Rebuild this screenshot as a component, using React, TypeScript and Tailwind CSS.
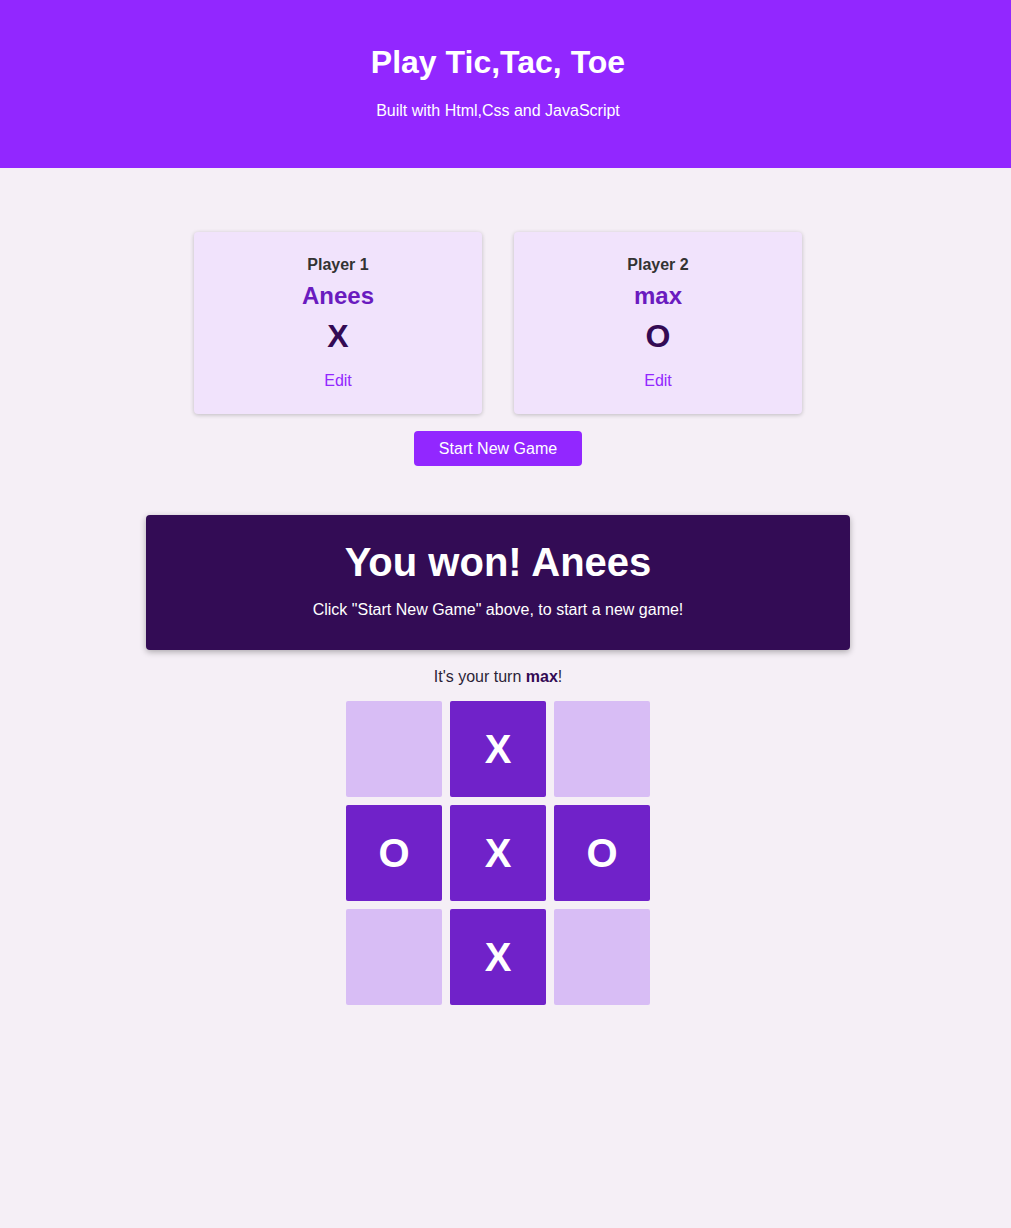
import React from "react";

const font = { fontFamily: '"Liberation Sans", Arial, Helvetica, sans-serif' };

function PlayerCard({ label, name, symbol }: { label: string; name: string; symbol: string }) {
  return (
    <div className="w-[288px] h-[182px] bg-[#f1e3fc] rounded-[4px] shadow-[0_1px_4px_rgba(0,0,0,0.22)] flex flex-col items-center pt-[24px]">
      <div className="text-[16px] leading-[18px] font-bold text-[#333]">{label}</div>
      <div className="mt-[8px] text-[24px] leading-[28px] font-bold text-[#6a1bbf]">{name}</div>
      <div className="mt-[8px] text-[32px] leading-[37px] font-bold text-[#330a54]">{symbol}</div>
      <div className="mt-[17px] text-[16px] leading-[18px] text-[#9227ff]">Edit</div>
    </div>
  );
}

const board: string[] = ["", "X", "", "O", "X", "O", "", "X", ""];

export default function App() {
  return (
    <div style={font} className="min-h-[1228px] bg-[#f5eff6]">
      <header className="h-[168px] bg-[#9227ff] pr-[15px] flex flex-col items-center pt-[44px]">
        <h1 className="text-[32px] leading-[37px] font-bold text-white">Play Tic,Tac, Toe</h1>
        <p className="mt-[21px] text-[16px] leading-[18px] text-white">Built with Html,Css and JavaScript</p>
      </header>
      <main className="pr-[15px] flex flex-col items-center">
        <div className="mt-[64px] flex gap-[32px]">
          <PlayerCard label="Player 1" name="Anees" symbol="X" />
          <PlayerCard label="Player 2" name="max" symbol="O" />
        </div>
        <button className="mt-[17px] w-[168px] h-[35px] bg-[#9227ff] rounded-[4px] text-white text-[16px]">
          Start New Game
        </button>
        <div className="mt-[49px] w-[704px] h-[135px] bg-[#330c55] rounded-[4px] shadow-[0_2px_6px_rgba(0,0,0,0.3)] flex flex-col items-center pt-[24px]">
          <h2 className="text-[40px] leading-[46px] font-bold text-white">You won! Anees</h2>
          <p className="mt-[16px] text-[16px] leading-[18px] text-white">
            Click "Start New Game" above, to start a new game!
          </p>
        </div>
        <p className="mt-[18px] text-[16px] leading-[18px] text-[#2c1f38]">
          It's your turn <span className="font-bold text-[#330a54]">max</span>!
        </p>
        <div className="mt-[15px] grid grid-cols-[96px_96px_96px] gap-[8px]">
          {board.map((v, i) => (
            <div
              key={i}
              className={
                "w-[96px] h-[96px] rounded-[2px] flex items-center justify-center text-white text-[40px] font-bold " +
                (v ? "bg-[#7022c9]" : "bg-[#d8bdf5]")
              }
            >
              {v}
            </div>
          ))}
        </div>
      </main>
    </div>
  );
}
